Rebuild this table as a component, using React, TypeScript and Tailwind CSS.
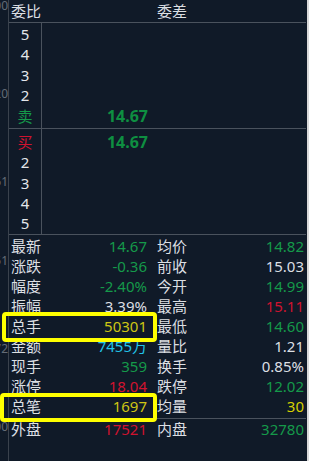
import React from "react";

const GREEN = "text-[#15994a]";
const RED = "text-[#d0132f]";
const WHITE = "text-[#dcdfe3]";

type Cell = { label: string; value: string; color: string };

const rows: [Cell, Cell][] = [
  [
    { label: "最新", value: "14.67", color: GREEN },
    { label: "均价", value: "14.82", color: GREEN },
  ],
  [
    { label: "涨跌", value: "-0.36", color: GREEN },
    { label: "前收", value: "15.03", color: WHITE },
  ],
  [
    { label: "幅度", value: "-2.40%", color: GREEN },
    { label: "今开", value: "14.99", color: GREEN },
  ],
  [
    { label: "振幅", value: "3.39%", color: WHITE },
    { label: "最高", value: "15.11", color: RED },
  ],
  [
    { label: "总手", value: "50301", color: "text-[#cdc614]" },
    { label: "最低", value: "14.60", color: GREEN },
  ],
  [
    { label: "金额", value: "7455万", color: "text-[#22c4ea]" },
    { label: "量比", value: "1.21", color: WHITE },
  ],
  [
    { label: "现手", value: "359", color: GREEN },
    { label: "换手", value: "0.85%", color: WHITE },
  ],
  [
    { label: "涨停", value: "18.04", color: RED },
    { label: "跌停", value: "12.02", color: GREEN },
  ],
  [
    { label: "总笔", value: "1697", color: "text-[#cdc614]" },
    { label: "均量", value: "30", color: "text-[#d6d000]" },
  ],
];

function StatRow({ l, r, h }: { l: Cell; r: Cell; h: string }) {
  return (
    <div className={`flex items-center ${h}`}>
      <div className="w-[146px] flex justify-between pl-[2px] pr-[8px]">
        <span className={WHITE}>{l.label}</span>
        <span className={l.color}>{l.value}</span>
      </div>
      <div className="flex-1 flex justify-between pl-[2px] pr-[2px]">
        <span className={WHITE}>{r.label}</span>
        <span className={r.color}>{r.value}</span>
      </div>
    </div>
  );
}

export default function App() {
  const sell = ["5", "4", "3", "2"];
  const buy = ["2", "3", "4", "5"];
  return (
    <div
      className="relative w-[309px] h-[461px] flex bg-[#101a28] overflow-hidden text-[15px] leading-none"
      style={{ fontFamily: '"Noto Sans", "Noto Sans CJK SC", sans-serif' }}
    >
      {/* axis strip */}
      <div className="relative w-[9px] shrink-0 border-r border-[#3a424d] overflow-hidden text-[12px] text-[#646c77]">
        <span className="absolute right-[0px] top-[0px]">00</span>
        <span className="absolute right-[0px] top-[88px]">20</span>
        <span className="absolute right-[0px] top-[176px]">61</span>
        <span className="absolute right-[0px] top-[255px]">51</span>
        <span className="absolute right-[0px] top-[343px]">72</span>
        <span className="absolute right-[0px] top-[421px]">00</span>
      </div>

      {/* main panel */}
      <div className="w-[297px] shrink-0 flex flex-col">
        {/* header */}
        <div className="h-[23px] flex items-center border-b border-[#4a525d]">
          <div className="w-[146px] pl-[2px] text-[#dcdfe3]">委比</div>
          <div className="pl-[2px] text-[#dcdfe3]">委差</div>
        </div>

        {/* sell side */}
        <div className="h-[106px] flex border-b border-[#4a525d]">
          <div className="w-[33px] border-r border-[#4a525d] pt-[1px] flex flex-col">
            {sell.map((s) => (
              <div key={s} className="h-[20.5px] flex items-center justify-center text-[#e4e7eb]">
                {s}
              </div>
            ))}
            <div className="h-[20.5px] flex items-center justify-center text-[#15994a]">卖</div>
          </div>
          <div className="flex-1 pt-[1px] flex flex-col">
            <div className="h-[82px]" />
            <div className="h-[20.5px] w-[106px] flex items-center justify-end text-[16px] font-bold text-[#0e8f41]">
              14.67
            </div>
          </div>
        </div>

        {/* buy side */}
        <div className="h-[106px] flex border-b border-[#4a525d]">
          <div className="w-[33px] border-r border-[#4a525d] pt-[3px] flex flex-col">
            <div className="h-[20.5px] flex items-center justify-center text-[#d0132f]">买</div>
            {buy.map((s) => (
              <div key={s} className="h-[20.5px] flex items-center justify-center text-[#e4e7eb]">
                {s}
              </div>
            ))}
          </div>
          <div className="flex-1 pt-[3px] flex flex-col">
            <div className="h-[20.5px] w-[106px] flex items-center justify-end text-[16px] font-bold text-[#0e8f41]">
              14.67
            </div>
          </div>
        </div>

        {/* stats */}
        <div className="pt-[1px] pb-[1px] border-b border-[#4a525d] flex flex-col">
          {rows.map(([l, r]) => (
            <StatRow key={l.label} l={l} r={r} h="h-[20.1px]" />
          ))}
        </div>
        <StatRow
          l={{ label: "外盘", value: "17521", color: RED }}
          r={{ label: "内盘", value: "32780", color: GREEN }}
          h="h-[22px]"
        />
      </div>

      <div className="w-[1px] shrink-0" />
      <div className="w-[2px] shrink-0 bg-[#d9d9d9]" />

      {/* highlight boxes */}
      <div className="absolute left-[2px] top-[312px] w-[155px] h-[30px] border-[4px] border-[#ffff00] rounded-[4px]" />
      <div className="absolute left-[0px] top-[393px] w-[157px] h-[29px] border-[4px] border-[#ffff00] rounded-[4px]" />
    </div>
  );
}
